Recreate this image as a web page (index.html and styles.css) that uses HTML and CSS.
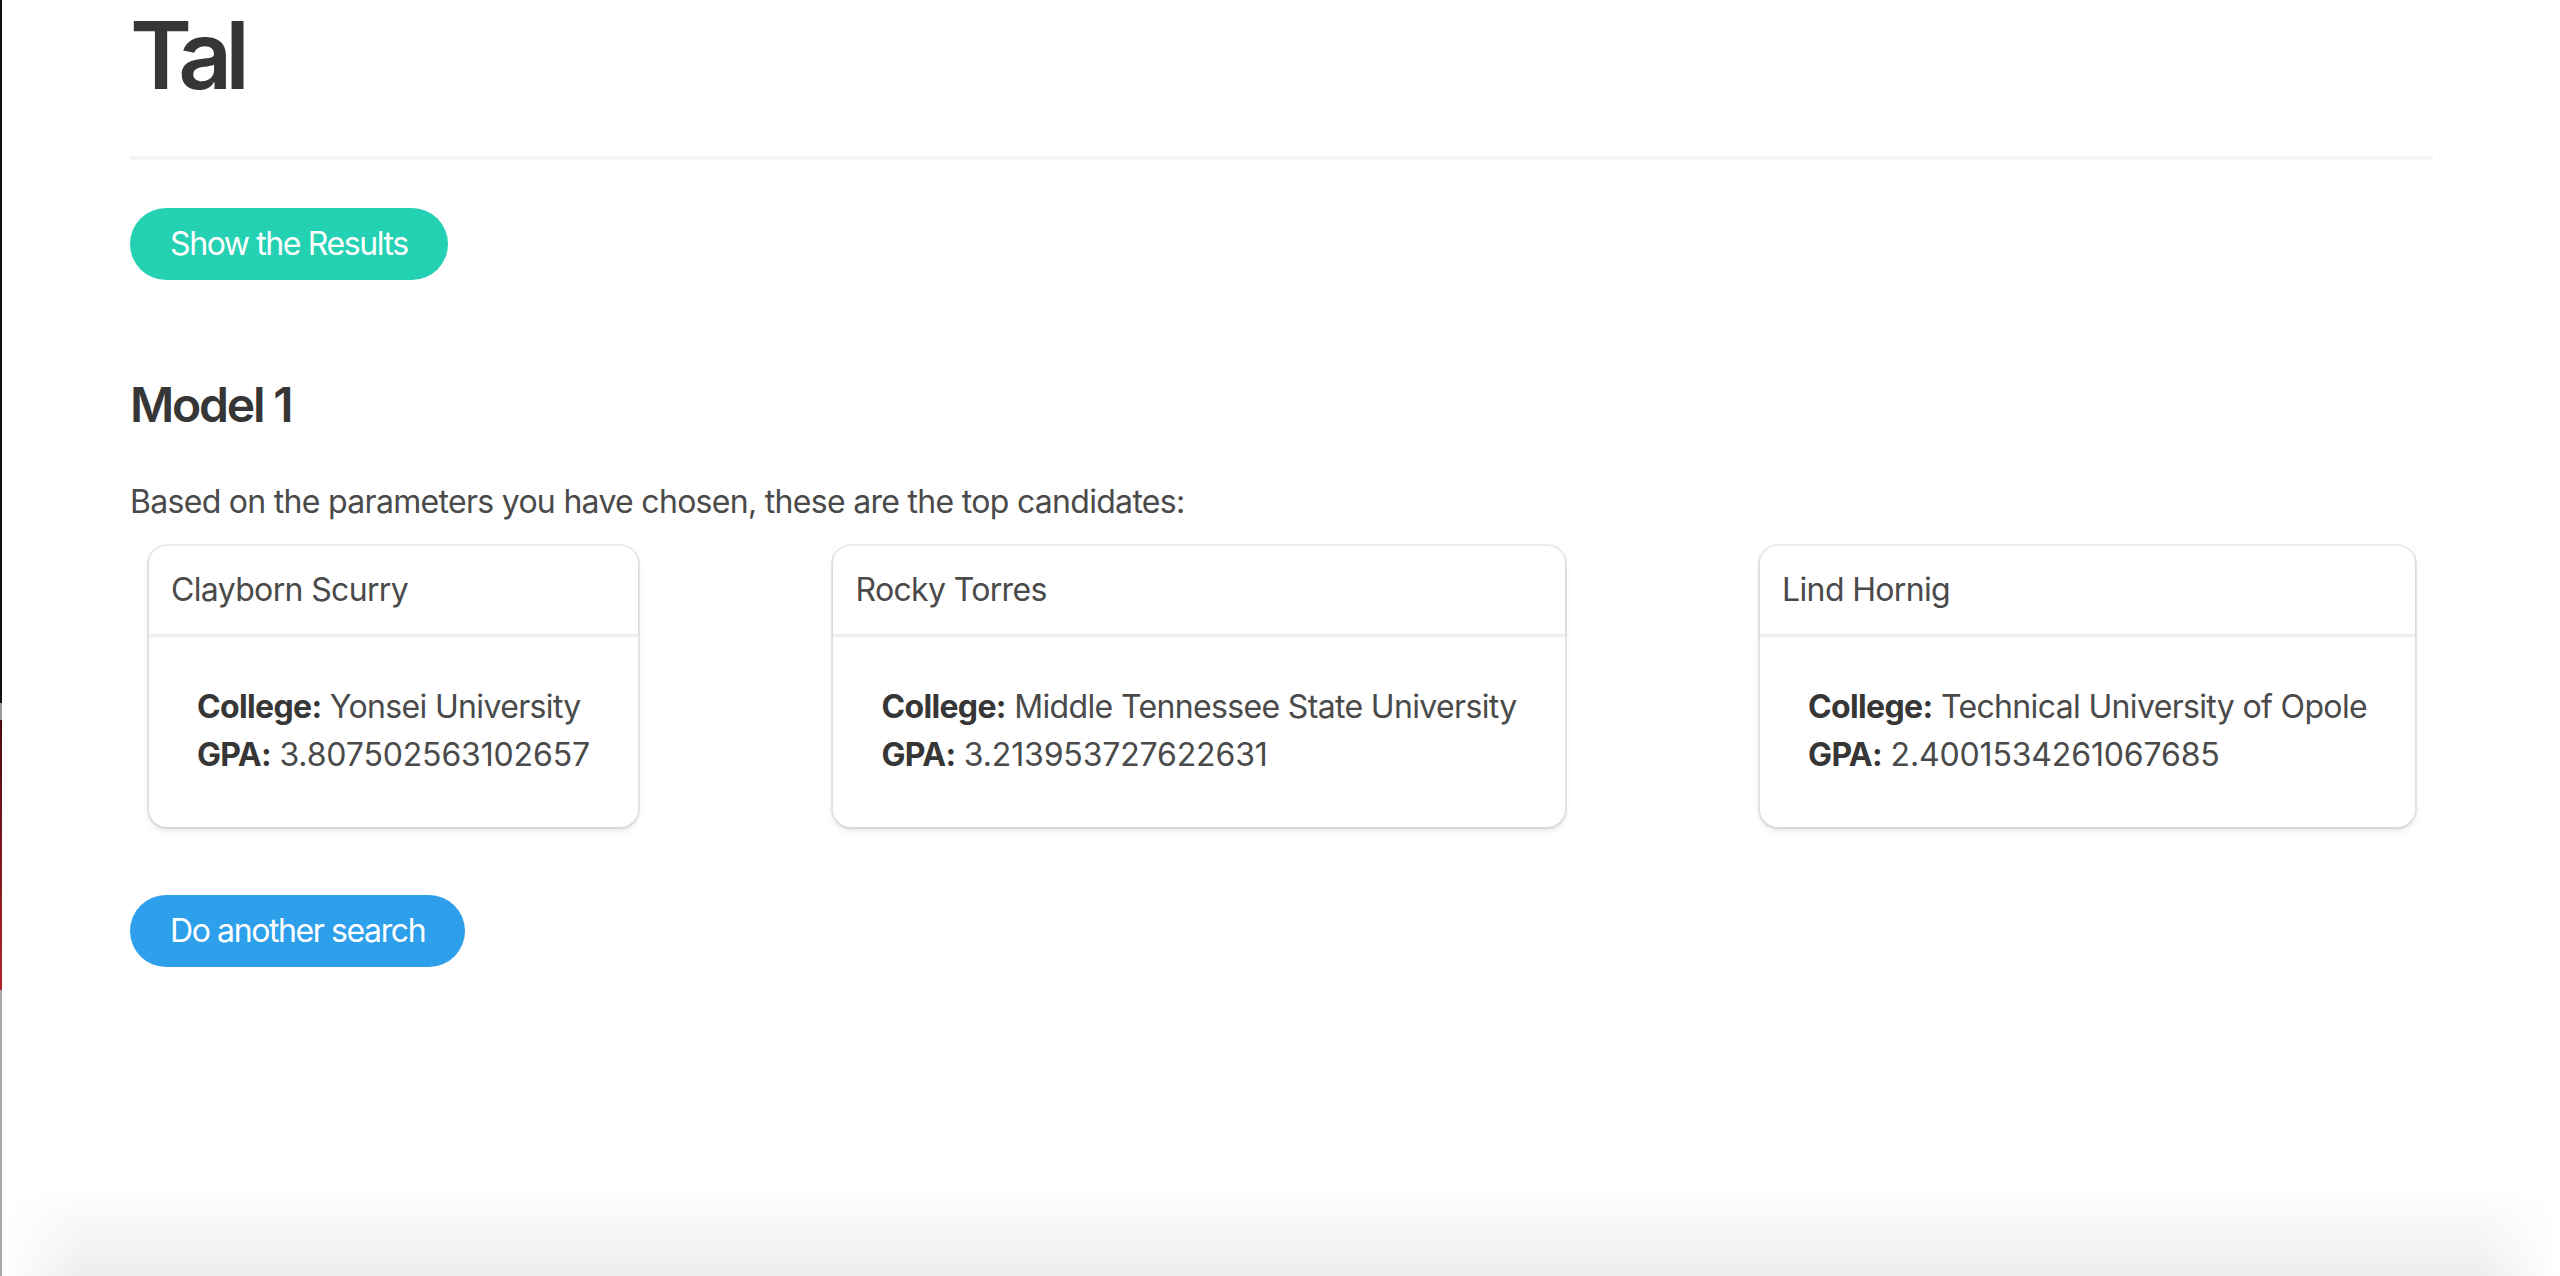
FILE: index.html
```html
<!DOCTYPE html>
<html lang="en">
<head>
<meta charset="utf-8">
<title>Tal</title>
<link rel="stylesheet" href="styles.css">
</head>
<body>
<div class="edge"></div>
<main class="page">
  <h1 class="title">Tal</h1>
  <hr class="divider">
  <button class="btn btn-primary">Show the Results</button>

  <section class="results">
    <h2 class="subtitle">Model 1</h2>
    <p class="lead">Based on the parameters you have chosen, these are the top candidates:</p>
    <div class="cards">
      <div class="card">
        <div class="card-header">Clayborn Scurry</div>
        <div class="card-content">
          <div><strong>College:</strong> Yonsei University</div>
          <div><strong>GPA:</strong> <span class="num">3.807502563102657</span></div>
        </div>
      </div>
      <div class="card">
        <div class="card-header">Rocky Torres</div>
        <div class="card-content">
          <div><strong>College:</strong> Middle Tennessee State University</div>
          <div><strong>GPA:</strong> <span class="num">3.213953727622631</span></div>
        </div>
      </div>
      <div class="card">
        <div class="card-header">Lind Hornig</div>
        <div class="card-content">
          <div><strong>College:</strong> Technical University of Opole</div>
          <div><strong>GPA:</strong> <span class="num">2.4001534261067685</span></div>
        </div>
      </div>
    </div>
    <button class="btn btn-info">Do another search</button>
  </section>
</main>
<div class="bottom-shade"></div>
</body>
</html>
```

FILE: styles.css
```css
html, body {
  margin: 0;
  padding: 0;
  background: #ffffff;
}

body {
  font-family: Inter, "Noto Sans", "Liberation Sans", sans-serif;
  font-size: 32px;
  line-height: 1.5;
  color: #4a4a4a;
  min-height: 1276px;
  position: relative;
  overflow: hidden;
}

.page {
  padding: 1px 127px 0 130px;
}

.title {
  margin: 0;
  font-size: 94px;
  line-height: 108px;
  font-weight: 600;
  color: #363636;
  letter-spacing: -7px;
}

.divider {
  border: none;
  height: 4px;
  background: #f5f5f5;
  margin: 47px 0 48px 0;
}

.btn {
  display: inline-flex;
  align-items: center;
  justify-content: center;
  height: 72px;
  padding: 0 40px;
  border: none;
  border-radius: 9999px;
  font-family: inherit;
  font-size: 32px;
  line-height: 1;
  color: #ffffff;
  letter-spacing: -1.4px;
  cursor: pointer;
}

.btn-primary {
  background: #25d1b3;
}

.btn-info {
  background: #2e9fea;
}

.results {
  padding-top: 95px;
}

.subtitle {
  margin: 0 0 43px 0;
  font-size: 48px;
  line-height: 60px;
  font-weight: 600;
  color: #363636;
  letter-spacing: -2.2px;
}

.lead {
  margin: 0 0 20px 0;
  letter-spacing: -0.7px;
}

.cards {
  display: flex;
  justify-content: space-between;
  align-items: flex-start;
  padding: 0 18px 0 19px;
  margin-bottom: 68px;
}

.card {
  background: #ffffff;
  border-radius: 18px;
  box-shadow: 0 4px 6px rgba(10, 10, 10, 0.1), 0 0 0 2px rgba(10, 10, 10, 0.08);
  letter-spacing: -0.65px;
}

.card-header {
  padding: 20px 22px;
  line-height: 48px;
  color: #4a4a4a;
  box-shadow: 0 2px 2px rgba(10, 10, 10, 0.08);
  border-bottom: 1px solid #ececec;
}

.card-content {
  padding: 48px 48px;
  line-height: 48px;
}

.card-content strong {
  font-weight: 700;
  color: #363636;
}

.num {
  letter-spacing: -0.15px;
}

.edge {
  position: absolute;
  left: 0;
  top: 0;
  width: 2px;
  height: 1276px;
  background: linear-gradient(to bottom,
    #111111 0px, #111111 703px,
    #9a9a9a 703px, #9a9a9a 720px,
    #4a0a10 720px, #b3242c 990px,
    #a8a8a8 990px, #a8a8a8 1276px);
  z-index: 5;
}

.bottom-shade {
  position: absolute;
  left: 0;
  right: 0;
  bottom: 0;
  height: 90px;
  background: linear-gradient(to bottom, rgba(230, 230, 230, 0), rgba(230, 230, 230, 0.7));
  -webkit-mask-image: linear-gradient(to right, transparent 0, #000 80px, #000 calc(100% - 80px), transparent 100%);
  mask-image: linear-gradient(to right, transparent 0, #000 80px, #000 calc(100% - 80px), transparent 100%);
  pointer-events: none;
}
```
